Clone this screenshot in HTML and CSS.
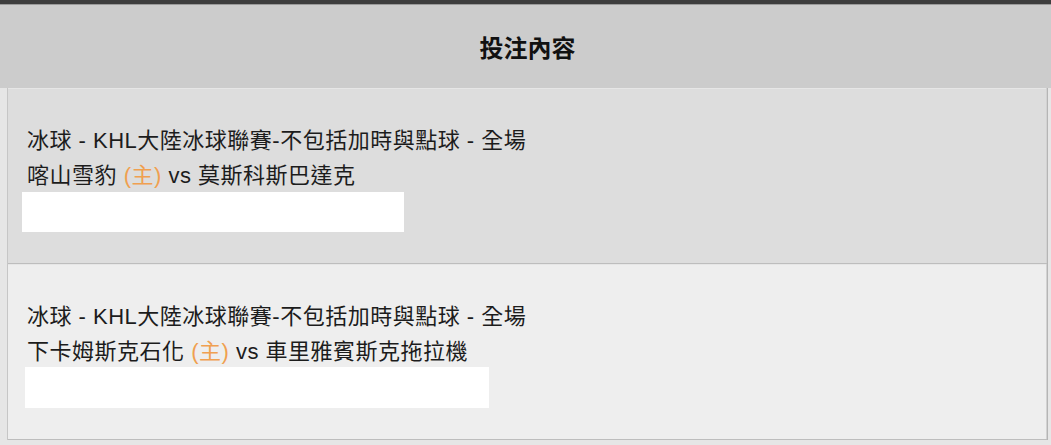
FILE: index.html
```html
<!DOCTYPE html>
<html lang="zh-Hant">
<head>
<meta charset="utf-8">
<link rel="stylesheet" href="styles.css">
</head>
<body>
<div class="topbar"></div>
<div class="header">投注內容</div>
<div class="table">
  <div class="row row-dark">
    <div class="cell">
      <div class="line">冰球 - KHL大陸冰球聯賽-不包括加時與點球 - 全場</div>
      <div class="line">喀山雪豹 <span class="home">(主)</span> vs 莫斯科斯巴達克</div>
      <div class="mask mask-1"></div>
    </div>
  </div>
  <div class="row row-light">
    <div class="cell">
      <div class="line">冰球 - KHL大陸冰球聯賽-不包括加時與點球 - 全場</div>
      <div class="line">下卡姆斯克石化 <span class="home">(主)</span> vs 車里雅賓斯克拖拉機</div>
      <div class="mask mask-2"></div>
    </div>
  </div>
</div>
</body>
</html>
```

FILE: styles.css
```css
html, body {
  margin: 0;
  padding: 0;
}
body {
  background: #e6e6e6;
  font-family: "Liberation Sans", "Noto Sans CJK TC", Arial, sans-serif;
  color: #1c1c1c;
  height: 445px;
  overflow: hidden;
}
.topbar {
  height: 4px;
  background: #3d3d3d;
  border-bottom: 1px solid #9a9a9a;
}
.header {
  height: 83px;
  background: #cccccc;
  display: flex;
  align-items: center;
  justify-content: center;
  padding-left: 4px;
  font-family: "Noto Sans CJK TC", sans-serif;
  font-weight: bold;
  font-size: 24px;
  color: #111;
}
.table {
  margin: 0 3px 0 7px;
  border-left: 1px solid #c6c6c6;
  border-right: 1px solid #b5b5b5;
}
.row {
  border-bottom: 1px solid #bdbdbd;
  box-shadow: inset -5px 0 0 -4px #d2d2d2, inset 0 7px 0 -6px #e6e6e6;
}
.row-dark {
  background: #dddddd;
  height: 175px;
}
.row-light {
  background: #eeeeee;
  height: 175px;
}
.cell {
  padding: 35px 0 0 19px;
}
.line {
  font-size: 22px;
  line-height: 35px;
  white-space: nowrap;
  letter-spacing: 0.5px;
}
.home {
  color: #f0a050;
}
.mask {
  background: #ffffff;
  height: 40px;
}
.mask-1 {
  width: 382px;
  margin-left: -5px;
  margin-top: -1px;
}
.mask-2 {
  width: 464px;
  margin-left: -2px;
  margin-top: -2px;
  height: 41px;
}
```
